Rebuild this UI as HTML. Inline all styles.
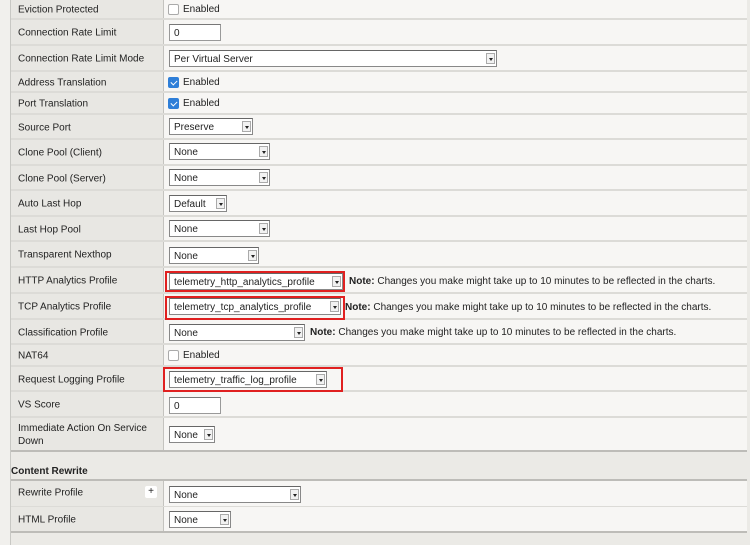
<!DOCTYPE html>
<html><head><style>
body{margin:0;width:750px;height:545px;background:#ebeae6;font-family:"Liberation Sans",sans-serif;font-size:10px;color:#222;position:relative;overflow:hidden}
.strip{position:absolute;left:0;top:0;width:10px;height:545px;background:#f1f0ed;border-right:1px solid #c8c8c4}
.row{position:absolute;left:11px;width:736px;border-bottom:2px solid #dcdbd7;background:#f7f6f4}
.lab{position:absolute;left:0;top:0;bottom:0;width:152px;background:#e8e7e3;border-right:1px solid #c4c3bf}
.lab span{position:absolute;left:7px;top:calc(50% + 1px);transform:translateY(-50%);line-height:13px}
.sel{position:absolute;height:17px;background:#fff;border:1px solid #888;border-top-color:#666;box-sizing:border-box;line-height:15px;padding-top:1px;padding-left:4px}
.sel i{position:absolute;right:1px;top:2px;width:9px;height:11px;border:1px solid #aaa;background:#f2f2f2;box-sizing:border-box}
.sel i:after{content:"";position:absolute;left:2px;top:4px;border-left:2px solid transparent;border-right:2px solid transparent;border-top:3px solid #222}
.inp{position:absolute;height:17px;background:#fff;border:1px solid #999;border-top-color:#777;box-sizing:border-box;line-height:15px;padding-top:1px;padding-left:4px}
.cb{position:absolute;left:157px;width:11px;height:11px;border:1px solid #aaa;border-radius:2px;background:#fff;box-sizing:border-box}
.cb.on{background:#2f7fd8;border-color:#2f7fd8}
.cb.on:after{content:"";position:absolute;left:3px;top:1px;width:3px;height:5px;border:solid #fff;border-width:0 1.5px 1.5px 0;transform:rotate(45deg)}
.txt{position:absolute;left:172px;line-height:13px}
.note{position:absolute;line-height:13px}
.red{position:absolute;border:2px solid #e02020;box-sizing:border-box}
</style></head><body>
<div class="strip"></div>

<div class="row" style="top:0;height:18px"><div class="lab"><span>Eviction Protected</span></div><div class="cb" style="top:4px"></div><div class="txt" style="top:3px">Enabled</div></div>
<div class="row" style="top:20px;height:24px"><div class="lab"><span>Connection Rate Limit</span></div><div class="inp" style="left:158px;top:4px;width:52px">0</div></div>
<div class="row" style="top:46px;height:24px"><div class="lab"><span>Connection Rate Limit Mode</span></div><div class="sel" style="left:158px;top:4px;width:328px">Per Virtual Server<i></i></div></div>
<div class="row" style="top:72px;height:19px"><div class="lab"><span>Address Translation</span></div><div class="cb on" style="top:5px"></div><div class="txt" style="top:4px">Enabled</div></div>
<div class="row" style="top:93px;height:20px"><div class="lab"><span>Port Translation</span></div><div class="cb on" style="top:5px"></div><div class="txt" style="top:4px">Enabled</div></div>
<div class="row" style="top:115px;height:23px"><div class="lab"><span>Source Port</span></div><div class="sel" style="left:158px;top:3px;width:84px">Preserve<i></i></div></div>
<div class="row" style="top:140px;height:24px"><div class="lab"><span>Clone Pool (Client)</span></div><div class="sel" style="left:158px;top:3px;width:101px">None<i></i></div></div>
<div class="row" style="top:166px;height:23px"><div class="lab"><span>Clone Pool (Server)</span></div><div class="sel" style="left:158px;top:3px;width:101px">None<i></i></div></div>
<div class="row" style="top:191px;height:24px"><div class="lab"><span>Auto Last Hop</span></div><div class="sel" style="left:158px;top:4px;width:58px">Default<i></i></div></div>
<div class="row" style="top:217px;height:23px"><div class="lab"><span>Last Hop Pool</span></div><div class="sel" style="left:158px;top:3px;width:101px">None<i></i></div></div>
<div class="row" style="top:242px;height:24px"><div class="lab"><span>Transparent Nexthop</span></div><div class="sel" style="left:158px;top:5px;width:90px">None<i></i></div></div>
<div class="row" style="top:268px;height:24px"><div class="lab"><span>HTTP Analytics Profile</span></div><div class="sel" style="left:158px;top:5px;width:174px">telemetry_http_analytics_profile<i></i></div><div class="note" style="left:338px;top:7px"><b>Note:</b> Changes you make might take up to 10 minutes to be reflected in the charts.</div></div>
<div class="row" style="top:294px;height:24px"><div class="lab"><span>TCP Analytics Profile</span></div><div class="sel" style="left:158px;top:4px;width:172px">telemetry_tcp_analytics_profile<i></i></div><div class="note" style="left:334px;top:7px"><b>Note:</b> Changes you make might take up to 10 minutes to be reflected in the charts.</div></div>
<div class="row" style="top:320px;height:23px"><div class="lab"><span>Classification Profile</span></div><div class="sel" style="left:158px;top:4px;width:136px">None<i></i></div><div class="note" style="left:299px;top:6px"><b>Note:</b> Changes you make might take up to 10 minutes to be reflected in the charts.</div></div>
<div class="row" style="top:345px;height:20px"><div class="lab"><span>NAT64</span></div><div class="cb" style="top:5px"></div><div class="txt" style="top:4px">Enabled</div></div>
<div class="row" style="top:367px;height:23px"><div class="lab"><span>Request Logging Profile</span></div><div class="sel" style="left:158px;top:4px;width:158px">telemetry_traffic_log_profile<i></i></div></div>
<div class="row" style="top:392px;height:24px"><div class="lab"><span>VS Score</span></div><div class="inp" style="left:158px;top:5px;width:52px">0</div></div>
<div class="row" style="top:418px;height:32px;border-bottom-color:#bdbcb8"><div class="lab"><span>Immediate Action On Service<br>Down</span></div><div class="sel" style="left:158px;top:8px;width:46px">None<i></i></div></div>

<div style="position:absolute;left:11px;top:466px;font-weight:bold">Content Rewrite</div>

<div class="row" style="top:479px;height:25px;border-top:2px solid #bdbcb8"><div class="lab"><span style="top:12px">Rewrite Profile</span><div style="position:absolute;left:134px;top:5px;width:12px;height:12px;background:#fff;border-radius:2px;text-align:center;line-height:12px;font-size:10px">+</div></div><div class="sel" style="left:158px;top:5px;width:132px">None<i></i></div></div>
<div class="row" style="top:507px;height:24px;border-bottom-color:#bdbcb8"><div class="lab"><span>HTML Profile</span></div><div class="sel" style="left:158px;top:4px;width:62px">None<i></i></div></div>

<div class="red" style="left:165px;top:271px;width:180px;height:21px"></div>
<div class="red" style="left:165px;top:296px;width:180px;height:24px"></div>
<div class="red" style="left:163px;top:367px;width:180px;height:25px"></div>
</body></html>
